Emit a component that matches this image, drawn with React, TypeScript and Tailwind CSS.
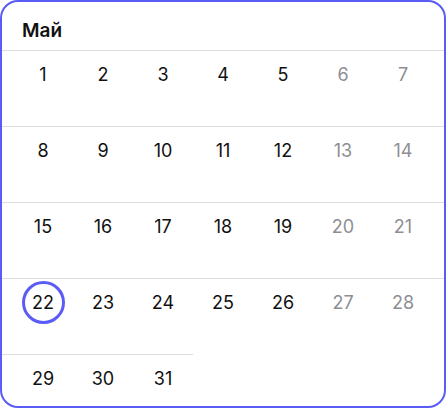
import React from 'react';

const weeks: number[][] = [
  [1, 2, 3, 4, 5, 6, 7],
  [8, 9, 10, 11, 12, 13, 14],
  [15, 16, 17, 18, 19, 20, 21],
  [22, 23, 24, 25, 26, 27, 28],
];

function Day({ day, col, first }: { day: number; col: number; first?: boolean }) {
  const weekend = col >= 5;
  const today = day === 22;
  return (
    <div className={first ? 'w-[71px] pl-[11px] shrink-0' : 'w-[60px] shrink-0'}>
      <div className="h-[46px] flex items-center justify-center">
        <span
          className={
            'flex items-center justify-center text-[18px] ' +
            (today ? 'w-[43px] h-[43px] rounded-full border-[3px] border-[#5b5cf6]' : '') +
            (weekend ? ' text-[#8e8e93]' : ' text-[#111]')
          }
        >
          {day}
        </span>
      </div>
    </div>
  );
}

export default function App() {
  return (
    <div
      className="w-[446px] h-[408px] bg-white border-[2.5px] border-[#5b5cf6] rounded-[18px] overflow-hidden"
      style={{ fontFamily: 'Inter, "Noto Sans", sans-serif' }}
    >
      <div className="h-[48px] flex items-center pt-[10px] pl-[20px] text-[19px] font-semibold text-[#111]">
        Май
      </div>
      {weeks.map((w, i) => (
        <div key={i} className="h-[76px] flex border-t border-[#dedede]">
          {w.map((d, j) => (
            <Day key={d} day={d} col={j} first={j === 0} />
          ))}
        </div>
      ))}
      <div className="w-[191px] flex border-t border-[#dedede]">
        {[29, 30, 31].map((d, j) => (
          <Day key={d} day={d} col={j} first={j === 0} />
        ))}
      </div>
    </div>
  );
}
